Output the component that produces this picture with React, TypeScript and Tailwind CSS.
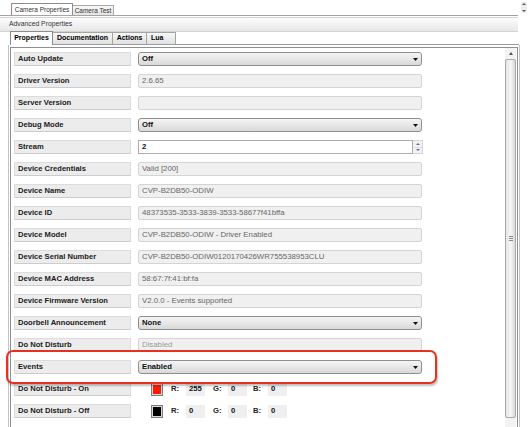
import React from "react";

type Row =
  | { label: string; kind: "select"; value: string }
  | { label: string; kind: "ro"; value: string; dim?: boolean }
  | { label: string; kind: "spin"; value: string }
  | { label: string; kind: "color"; swatch: string; r: string; g: string; b: string };

const rows: Row[] = [
  { label: "Auto Update", kind: "select", value: "Off" },
  { label: "Driver Version", kind: "ro", value: "2.6.65" },
  { label: "Server Version", kind: "ro", value: "" },
  { label: "Debug Mode", kind: "select", value: "Off" },
  { label: "Stream", kind: "spin", value: "2" },
  { label: "Device Credentials", kind: "ro", value: "Valid [200]" },
  { label: "Device Name", kind: "ro", value: "CVP-B2DB50-ODIW" },
  { label: "Device ID", kind: "ro", value: "48373535-3533-3839-3533-58677f41bffa" },
  { label: "Device Model", kind: "ro", value: "CVP-B2DB50-ODIW - Driver Enabled" },
  { label: "Device Serial Number", kind: "ro", value: "CVP-B2DB50-ODIW0120170426WR755538953CLU" },
  { label: "Device MAC Address", kind: "ro", value: "58:67:7f:41:bf:fa" },
  { label: "Device Firmware Version", kind: "ro", value: "V2.0.0 - Events supported" },
  { label: "Doorbell Announcement", kind: "select", value: "None" },
  { label: "Do Not Disturb", kind: "ro", value: "Disabled", dim: true },
  { label: "Events", kind: "select", value: "Enabled" },
  { label: "Do Not Disturb - On", kind: "color", swatch: "bg-[#ff1a00]", r: "255", g: "0", b: "0" },
  { label: "Do Not Disturb - Off", kind: "color", swatch: "bg-black", r: "0", g: "0", b: "0" },
];

function DownArrow() {
  return (
    <svg width="5" height="3" viewBox="0 0 5 3" className="block">
      <path d="M0 0 H5 L2.5 3 Z" fill="#111" />
    </svg>
  );
}

function Value({ row }: { row: Row }) {
  if (row.kind === "select") {
    return (
      <div className="ml-[7px] w-[284px] h-[14px] flex items-center justify-between rounded-[3px] border border-[#8e8f8f] bg-gradient-to-b from-[#f5f5f5] to-[#d9d9d9] pl-[3px] pr-[3px] text-[7.7px] font-bold text-[#111]">
        <span>{row.value}</span>
        <DownArrow />
      </div>
    );
  }
  if (row.kind === "spin") {
    return (
      <div className="ml-[7px] w-[285px] h-[14px] flex">
        <div className="flex-1 flex items-center border border-[#abadb3] bg-white pl-[3px] text-[7.7px] font-bold text-[#111]">
          {row.value}
        </div>
        <div className="w-[10px] flex flex-col border border-l-0 border-[#d5d5d5] bg-[#f2f2f2]">
          <div className="flex-1 flex items-center justify-center border-b border-[#dcdcdc]">
            <svg width="4" height="2" viewBox="0 0 4 2"><path d="M0 2 H4 L2 0 Z" fill="#5a6f8e" /></svg>
          </div>
          <div className="flex-1 flex items-center justify-center">
            <svg width="4" height="2" viewBox="0 0 4 2"><path d="M0 0 H4 L2 2 Z" fill="#5a6f8e" /></svg>
          </div>
        </div>
      </div>
    );
  }
  if (row.kind === "color") {
    const box = "h-[13px] w-[19px] flex items-center rounded-[1px] bg-[#efefef] pl-[3px] text-[7.7px] font-bold text-[#111]";
    const lbl = "w-[15px] text-[7.7px] font-bold text-[#222]";
    return (
      <div className="flex items-center h-[14px]">
        <div className="ml-[20px] w-[12px] h-[13px] border border-[#7d7d7d] bg-[#d8d8d8] p-[1px]">
          <div className={`w-full h-full ${row.swatch}`} />
        </div>
        <span className={`ml-[8px] ${lbl}`}>R:</span>
        <div className={box}>{row.r}</div>
        <span className={`ml-[8px] ${lbl}`}>G:</span>
        <div className={box}>{row.g}</div>
        <span className={`ml-[6px] ${lbl}`}>B:</span>
        <div className={box}>{row.b}</div>
      </div>
    );
  }
  return (
    <div
      className={`ml-[7px] w-[284px] h-[14px] flex items-center rounded-[2px] border border-[#d4d4d4] bg-[#f0f0f0] pl-[3px] text-[7.8px] whitespace-nowrap overflow-hidden ${
        row.dim ? "text-[#9a9a9a]" : "text-[#666666]"
      }`}
    >
      {row.value}
    </div>
  );
}

export default function App() {
  return (
    <div className="relative w-[530px] h-[427px] overflow-hidden bg-white font-['Liberation_Sans',Arial,sans-serif] text-black">
      {/* top tabs */}
      <div className="flex items-end h-[16px] border-b border-[#a3a3a3] mr-[12px] pl-[11px] relative">
        <div className="h-[12px] w-[62px] flex items-center justify-center border border-b-0 border-[#8d8d8d] bg-white text-[6.5px] text-[#333]">
          Camera Properties
        </div>
        <div className="h-[10px] w-[41px] flex items-center justify-center border border-l-0 border-b-0 border-[#a8a8a8] bg-gradient-to-b from-[#f7f7f7] to-[#e4e4e4] text-[6.5px] text-[#333]">
          Camera Test
        </div>
        <div className="ml-auto mb-[2px] mr-[-9px] w-[6px] h-[11px] flex flex-col items-center justify-between bg-[#ededed] py-[1px]">
          <svg width="4" height="2" viewBox="0 0 4 2"><path d="M0 2 H4 L2 0 Z" fill="#555" /></svg>
          <svg width="4" height="2" viewBox="0 0 4 2"><path d="M0 0 H4 L2 2 Z" fill="#555" /></svg>
        </div>
      </div>

      {/* advanced properties bar */}
      <div className="mt-[1px] mr-[12px] h-[15px] flex items-center pl-[9px] border-y border-[#d3d3d3] bg-gradient-to-b from-[#fcfcfc] to-[#e8e8e8] text-[6.8px] text-[#333]">
        Advanced Properties
      </div>

      {/* inner tabs */}
      <div className="ml-[10px] mr-[11px] h-[13px] flex items-end border-b border-[#9c9c9c]">
        <div className="h-[14px] -mb-px w-[43px] flex items-center justify-center border border-b-0 border-[#8c8c8c] bg-white text-[7px] font-bold">
          Properties
        </div>
        <div className="h-[12px] w-[60px] flex items-center justify-center border border-l-0 border-b-0 border-[#a4a4a4] bg-gradient-to-b from-[#f6f6f6] to-[#e2e2e2] text-[7px] font-bold">
          Documentation
        </div>
        <div className="h-[12px] w-[34px] flex items-center justify-center border border-l-0 border-b-0 border-[#a4a4a4] bg-gradient-to-b from-[#f6f6f6] to-[#e2e2e2] text-[7px] font-bold">
          Actions
        </div>
        <div className="h-[12px] w-[29px] flex items-center border border-l-0 border-b-0 border-[#a4a4a4] bg-gradient-to-b from-[#f6f6f6] to-[#e2e2e2] pl-[4px] text-[7px] font-bold">
          Lua
        </div>
      </div>

      {/* panel */}
      <div className="ml-[8px] w-[512px] h-[400px] border-l border-r border-[#c3c3c3] pt-[2px] px-px">
        <div className="h-full flex border border-[#8a8f98] border-b-0">
          <div className="flex-1 flex flex-col gap-[8px] pt-[4px] pl-[3px]">
            {rows.map((row) => (
              <div key={row.label} className="flex items-center h-[14px]">
                <div className="w-[117px] h-[14px] flex items-center rounded-[1px] border border-[#dcdcdc] border-b-[#cccccc] bg-[#ececec] pl-[3px] text-[7.6px] font-bold text-[#1a1a1a] whitespace-nowrap">
                  {row.label}
                </div>
                <Value row={row} />
              </div>
            ))}
          </div>

          {/* scrollbar */}
          <div className="w-[11px] flex flex-col bg-[#f3f3f3] mr-px">
            <div className="h-[11px] flex items-center justify-center">
              <svg width="4" height="3" viewBox="0 0 4 3"><path d="M0 3 H4 L2 0 Z" fill="#555" /></svg>
            </div>
            <div className="h-[359px] flex items-center justify-center rounded-[2px] border border-[#a9a9a9] bg-gradient-to-r from-[#e4e4e4] via-[#f6f6f6] to-[#dadada]">
              <div className="flex flex-col gap-px">
                <div className="w-[4px] h-px bg-[#8a8a8a]" />
                <div className="w-[4px] h-px bg-[#8a8a8a]" />
                <div className="w-[4px] h-px bg-[#8a8a8a]" />
              </div>
            </div>
          </div>
        </div>
      </div>

      {/* red highlight */}
      <div className="absolute left-[6px] top-[350px] w-[431px] h-[34px] rounded-[7px] border-[2.5px] border-[#e8301c] shadow-[1px_2px_2px_rgba(0,0,0,0.25)]" />
    </div>
  );
}
